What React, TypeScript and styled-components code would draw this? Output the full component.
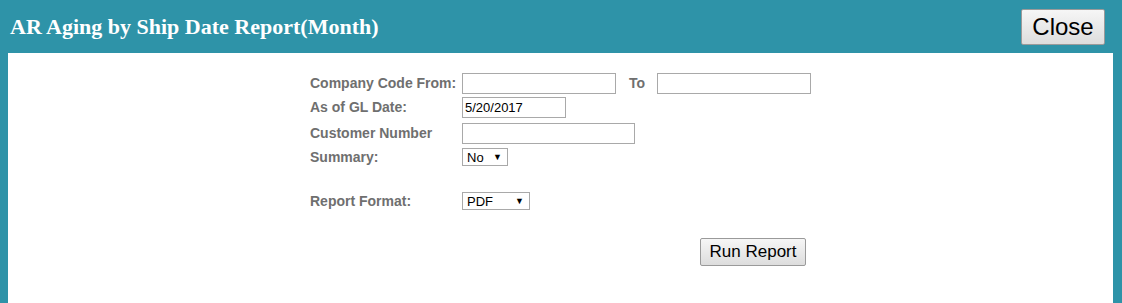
import React from 'react';
import styled, { createGlobalStyle } from 'styled-components';

const GlobalStyle = createGlobalStyle`
  html, body {
    margin: 0;
    padding: 0;
    background: #2e93a8;
  }
`;

const Page = styled.div`
  width: 1122px;
  height: 303px;
  background: #2e93a8;
  display: flex;
  flex-direction: column;
  overflow: hidden;
`;

const Header = styled.div`
  height: 53px;
  display: flex;
  align-items: flex-start;
  justify-content: space-between;
  padding: 0 17px 0 10px;
  box-sizing: border-box;
`;

const Title = styled.h1`
  margin: 14px 0 0;
  font-family: 'Liberation Serif', serif;
  font-size: 22px;
  font-weight: bold;
  color: #ffffff;
`;

const CloseButton = styled.button`
  margin-top: 9px;
  width: 84px;
  height: 36px;
  font-family: 'Liberation Sans', Arial, sans-serif;
  font-size: 24px;
  color: #000;
  background: linear-gradient(#f6f6f6, #dddddd);
  border: 1px solid #9a9a9a;
  border-radius: 2px;
  padding: 0;
`;

const Body = styled.div`
  flex: 1;
  margin: 0 9px 0 8px;
  background: #ffffff;
  padding: 20px 0 0 302px;
`;

const Form = styled.div`
  display: grid;
  grid-template-columns: 152px auto;
  grid-template-rows: 24px 26px 24px 20px 24px 20px;
  align-items: start;
  font-family: 'Liberation Sans', Arial, sans-serif;
`;

const Label = styled.label`
  font-size: 14px;
  line-height: 21px;
  font-weight: bold;
  color: #6f6f6f;
  white-space: nowrap;
`;

const SelectLabel = styled(Label)`
  line-height: 20px;
`;

const FieldRow = styled.div`
  display: flex;
  align-items: center;
`;

const TextInput = styled.input<{ $w: number }>`
  width: ${p => p.$w}px;
  height: 21px;
  box-sizing: border-box;
  border: 1px solid #a9a9a9;
  padding: 1px 2px;
  font-family: 'Liberation Sans', Arial, sans-serif;
  font-size: 13px;
  color: #000;
`;

const ToLabel = styled(Label)`
  margin: 0 12px 0 13px;
`;

const Select = styled.div<{ $w: number }>`
  margin-top: 1px;
  width: ${p => p.$w}px;
  height: 18px;
  box-sizing: border-box;
  border: 1px solid #a9a9a9;
  display: flex;
  align-items: center;
  justify-content: space-between;
  padding: 0 5px 0 4px;
  font-size: 13px;
  color: #000;
  background: #fff;
`;

const Arrow = styled.span`
  font-size: 9px;
`;

const Spacer = styled.div`
  grid-column: 1 / 3;
`;

const Actions = styled.div`
  display: flex;
  padding: 27px 0 0 390px;
`;

const RunButton = styled.button`
  width: 106px;
  height: 28px;
  font-family: 'Liberation Sans', Arial, sans-serif;
  font-size: 17px;
  color: #000;
  background: linear-gradient(#f6f6f6, #dddddd);
  border: 1px solid #9a9a9a;
  border-radius: 2px;
  padding: 0;
`;

export default function App() {
  return (
    <Page>
      <GlobalStyle />
      <Header>
        <Title>AR Aging by Ship Date Report(Month)</Title>
        <CloseButton>Close</CloseButton>
      </Header>
      <Body>
        <Form>
          <Label>Company Code From:</Label>
          <FieldRow>
            <TextInput $w={154} />
            <ToLabel>To</ToLabel>
            <TextInput $w={154} />
          </FieldRow>
          <Label>As of GL Date:</Label>
          <FieldRow>
            <TextInput $w={104} defaultValue="5/20/2017" />
          </FieldRow>
          <Label>Customer Number</Label>
          <FieldRow>
            <TextInput $w={173} />
          </FieldRow>
          <SelectLabel>Summary:</SelectLabel>
          <FieldRow>
            <Select $w={46}>No <Arrow>▼</Arrow></Select>
          </FieldRow>
          <Spacer />
          <SelectLabel>Report Format:</SelectLabel>
          <FieldRow>
            <Select $w={68}>PDF <Arrow>▼</Arrow></Select>
          </FieldRow>
        </Form>
        <Actions>
          <RunButton>Run Report</RunButton>
        </Actions>
      </Body>
    </Page>
  );
}
